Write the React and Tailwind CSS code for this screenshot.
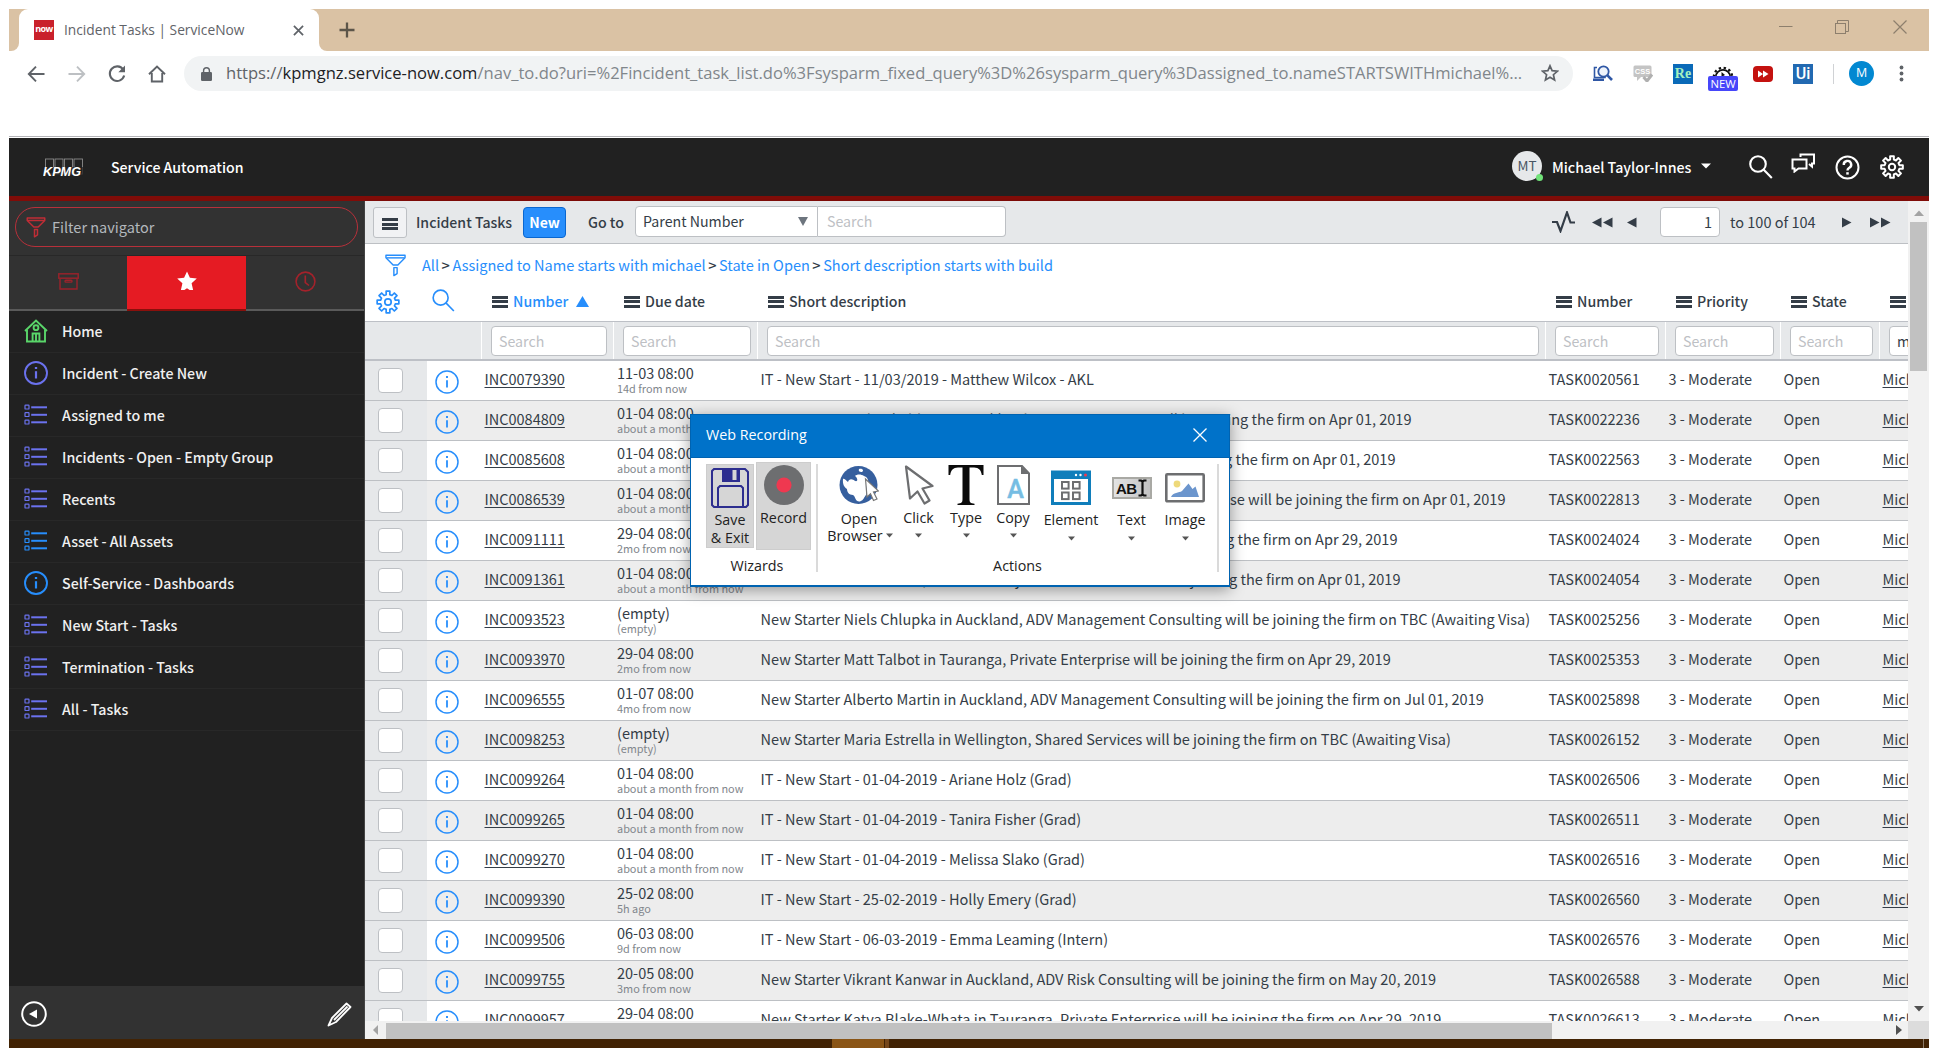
import React from "react";

const UI = "font-['Noto_Sans_CJK_SC',sans-serif]";
const SEGOE = "font-['Open_Sans',sans-serif]";

/* ---------- icons ---------- */

function Gear({ size, color, sw = 2 }) {
  const pts = [];
  const n = 8;
  for (let i = 0; i < n; i++) {
    const a = (i / n) * Math.PI * 2 - Math.PI / 2;
    const p = (r, d) => `${(12 + r * Math.cos(a + d)).toFixed(2)},${(12 + r * Math.sin(a + d)).toFixed(2)}`;
    pts.push(p(7.6, -0.24), p(11, -0.17), p(11, 0.17), p(7.6, 0.24));
  }
  return (
    <svg width={size} height={size} viewBox="0 0 24 24" fill="none" stroke={color} strokeWidth={sw} strokeLinejoin="round">
      <polygon points={pts.join(" ")} />
      <circle cx="12" cy="12" r="3.2" />
    </svg>
  );
}

function Magnifier({ size, color, sw = 2 }) {
  return (
    <svg width={size} height={size} viewBox="0 0 24 24" fill="none" stroke={color} strokeWidth={sw}>
      <circle cx="9" cy="9" r="7.8" />
      <path d="M14.5 14.5L22.8 23" />
    </svg>
  );
}

function Funnel({ w, h, color, sw = 1.5 }) {
  return (
    <svg width={w} height={h} viewBox="0 0 22 24" fill="none" stroke={color} strokeWidth={sw} strokeLinejoin="round">
      <path d="M1 1.2H21V4L13.5 11.5H8.5L1 4Z" />
      <path d="M1.5 4H20.5" />
      <path d="M9.3 14.2H12.7V20.5L9.3 22.6Z" />
    </svg>
  );
}

function InfoCircle({ color, size = 24, sw = 1.6 }) {
  return (
    <svg width={size} height={size} viewBox="0 0 24 24" fill="none" stroke={color} strokeWidth={sw}>
      <circle cx="12" cy="12" r="11" />
      <path d="M12 10.2V17.5" strokeWidth={sw + 0.3} />
      <path d="M12 6V8" strokeWidth={sw + 0.4} />
    </svg>
  );
}

function ListGlyph({ color }) {
  return (
    <svg width="24" height="22" viewBox="0 0 24 22" fill="none" stroke={color}>
      {[3, 10.5, 18].map((y) => (
        <g key={y}>
          <rect x="1" y={y - 1.8} width="4" height="3.8" rx="0.6" strokeWidth="1.2" />
          <path d={`M7.2 ${y + 0.3}H23`} strokeWidth="2" />
        </g>
      ))}
    </svg>
  );
}

function HomeGlyph() {
  return (
    <svg width="24" height="24" viewBox="0 0 24 24" fill="none" stroke="#5ad66a" strokeWidth="1.9">
      <path d="M1 12L12 1.5L23 12" />
      <path d="M3 10.5V22.5H21V10.5" />
      <circle cx="12" cy="8.7" r="2.4" />
      <path d="M8.6 22.5V14.5H15.4V22.5M12 14.5V22.5" />
    </svg>
  );
}

function Burger() {
  return (
    <span className="flex w-4 flex-col gap-[1.5px]">
      <span className="h-[3px] bg-[#343d47]" />
      <span className="h-[3px] bg-[#343d47]" />
      <span className="h-[3px] bg-[#343d47]" />
    </span>
  );
}

function Arrows({ dir, count }) {
  return (
    <svg width={count * 11 - 1} height="11" viewBox={`0 0 ${count * 11 - 1} 11`} fill="#343d47">
      {Array.from({ length: count }, (_, i) => (
        <path key={i} d={dir === "left" ? `M${i * 11} 5.5L${i * 11 + 9.5} 0.5V10.5Z` : `M${i * 11 + 9.5} 5.5L${i * 11} 0.5V10.5Z`} />
      ))}
    </svg>
  );
}

/* ---------- browser chrome ---------- */

function TabStrip() {
  return (
    <div className={`flex h-[42px] shrink-0 items-stretch bg-[#dac2a4] ${SEGOE}`}>
      <div className="w-[10px] bg-white">
        <div className="h-full rounded-br-[8px] bg-[#dac2a4]" />
      </div>
      <div className="flex w-[300px] items-center rounded-t-[9px] bg-white pl-[15px]">
        <div className="flex h-5 w-5 items-center justify-center bg-[#c9202b] pb-[2px] text-[9px] font-bold tracking-[-0.6px] text-white">now</div>
        <div className="ml-[10px] w-[229px] whitespace-nowrap text-[13.75px] text-[#5f6368]">Incident Tasks | ServiceNow</div>
        <svg width="11" height="11" viewBox="0 0 12 12" stroke="#5f6368" strokeWidth="1.9">
          <path d="M1 1L11 11M11 1L1 11" />
        </svg>
      </div>
      <div className="flex flex-1 items-center bg-white">
        <div className="flex h-full flex-1 items-center rounded-bl-[8px] bg-[#dac2a4] pl-5">
          <svg width="16" height="16" viewBox="0 0 16 16" stroke="#5c5549" strokeWidth="2.3">
            <path d="M8 0.5V15.5M0.5 8H15.5" />
          </svg>
          <div className="mb-[6px] ml-auto flex items-center pr-[22px]">
            <svg width="14" height="14" viewBox="0 0 14 14" stroke="#8d7f6d" fill="none"><path d="M0 6.5H13.5" /></svg>
            <svg className="ml-[42px]" width="14" height="14" viewBox="0 0 14 14" stroke="#8d7f6d" fill="none">
              <rect x="0.5" y="3.5" width="10" height="10" /><path d="M2.5 3V0.5H13.5V11.5H11" />
            </svg>
            <svg className="ml-[44px]" width="14" height="14" viewBox="0 0 14 14" stroke="#8d7f6d" strokeWidth="1.2"><path d="M0.5 0.5L13.5 13.5M13.5 0.5L0.5 13.5" /></svg>
          </div>
        </div>
      </div>
    </div>
  );
}

function AddressBar() {
  return (
    <div className={`flex h-[45px] shrink-0 items-center bg-white pl-[18px] ${SEGOE}`}>
      <svg width="18" height="18" viewBox="0 0 18 18" fill="none" stroke="#5f6368" strokeWidth="1.9"><path d="M17.5 9H2M9 1.7L1.8 9L9 16.3" /></svg>
      <svg className="ml-[23px]" width="18" height="18" viewBox="0 0 18 18" fill="none" stroke="#bdc0c3" strokeWidth="1.9"><path d="M0.5 9H16M9 1.7L16.2 9L9 16.3" /></svg>
      <svg className="ml-[22px]" width="18" height="18" viewBox="0 0 18 18" fill="none" stroke="#5f6368" strokeWidth="2.1">
        <path d="M15.2 4.6A7.3 7.3 0 1 0 16.2 10.6" /><path d="M17 0.5V7.2H10.3Z" fill="#5f6368" stroke="none" />
      </svg>
      <svg className="ml-[22px]" width="18" height="18" viewBox="0 0 18 18" fill="none" stroke="#5f6368" strokeWidth="1.9">
        <path d="M1 9.2L9 1.5L17 9.2M3.8 8V16.5H14.2V8" />
      </svg>
      <div className="ml-[18px] flex h-[35px] w-[1389px] items-center rounded-full bg-[#f1f3f4] pl-[17px]">
        <svg width="11" height="14" viewBox="0 0 11 14" fill="#5f6368">
          <rect x="0" y="5" width="11" height="9" rx="1.2" /><path d="M2.6 6V3.6a2.9 2.9 0 0 1 5.8 0V6" fill="none" stroke="#5f6368" strokeWidth="1.4" />
        </svg>
        <div className="ml-[14px] w-[1315px] whitespace-nowrap text-[16.57px] text-[#80868b]">
          <span className="text-[#5f6368]">https://</span><span className="text-[#202124]">kpmgnz.service-now.com</span>/nav_to.do?uri=%2Fincident_task_list.do%3Fsysparm_fixed_query%3D%26sysparm_query%3Dassigned_to.nameSTARTSWITHmichael%...
        </div>
        <svg className="-mt-[2px] shrink-0" width="18" height="18" viewBox="0 0 18 18" fill="none" stroke="#5f6368" strokeWidth="1.7">
          <path d="M9 1.8L11.1 6.7L16.5 7.2L12.4 10.7L13.6 16L9 13.2L4.4 16L5.6 10.7L1.5 7.2L6.9 6.7Z" />
        </svg>
      </div>
      <svg className="ml-[19px]" width="21" height="17" viewBox="0 0 21 17" fill="none">
        <path d="M5 2.5H2.5V12.5H13V11" stroke="#2f57a5" strokeWidth="1.6" /><path d="M1 13.5H12V16H1Z" fill="#2f57a5" />
        <circle cx="11.5" cy="6.5" r="5.2" stroke="#2f57a5" strokeWidth="1.8" fill="#eef3fb" /><path d="M15.2 10.2L20 15" stroke="#2f57a5" strokeWidth="2.6" />
      </svg>
      <svg className="ml-5" width="20" height="17" viewBox="0 0 20 17">
        <rect x="0.5" y="0.5" width="18" height="11.5" rx="1.5" fill="#c4c4c4" /><path d="M4 12V16L8 12Z" fill="#c4c4c4" />
        <text x="9.5" y="9" fontSize="7.5" fontWeight="700" fill="#fff" textAnchor="middle" fontFamily="Liberation Sans">CSS</text>
        <path d="M10.5 12L14 16L19 9.5" stroke="#b0b0b0" strokeWidth="3" fill="none" />
      </svg>
      <div className="ml-5 flex h-5 w-5 items-center justify-center bg-[#0a6ab8] font-['Liberation_Serif',serif] text-[14px] font-bold text-[#a5f0c0]">Re</div>
      <div className="ml-[15px] flex w-[30px] flex-col items-center self-start pt-[13px]">
        <svg width="22" height="13" viewBox="0 0 22 13" fill="none" stroke="#111">
          <path d="M3.8 13A7.2 7.2 0 0 1 18.2 13" strokeWidth="1.8" /><path d="M1.8 13A9.2 9.2 0 0 1 20.2 13" strokeWidth="2.2" strokeDasharray="2.4 2.6" />
          <path d="M9.5 8L13 11L9.5 13Z" fill="#111" stroke="none" />
        </svg>
        <div className="-mt-px flex h-[15px] w-[30px] items-center justify-center rounded-[2px] bg-[#4646fa] text-[11.3px] leading-none text-white">NEW</div>
      </div>
      <svg className="ml-[15px]" width="20" height="16" viewBox="0 0 20 16">
        <rect width="20" height="16" rx="4" fill="#c4120f" /><path d="M5 4.5L10 8L5 11.5ZM10 4.5L15.5 8L10 11.5Z" fill="#fff" />
      </svg>
      <div className="ml-5 flex h-5 w-5 items-center justify-center bg-[#2269b1] font-['Roboto',sans-serif] text-[16px] font-medium leading-none text-white">Ui</div>
      <div className="ml-5 h-5 w-px bg-[#d0d2d5]" />
      <div className="ml-[15px] flex h-[25px] w-[25px] items-center justify-center rounded-full bg-[#0288d1] text-[12.5px] text-white">M</div>
      <svg className="ml-[25px]" width="5" height="17" viewBox="0 0 5 17" fill="#5f6368"><circle cx="2.5" cy="2.5" r="1.9" /><circle cx="2.5" cy="8.5" r="1.9" /><circle cx="2.5" cy="14.5" r="1.9" /></svg>
    </div>
  );
}

/* ---------- application ---------- */

function Banner() {
  return (
    <div className="flex h-[63px] shrink-0 items-center border-b-[5px] border-[#800c08] bg-[#212121] pl-[34px] pt-[2px] text-white">
      <svg width="42" height="20" viewBox="0 0 42 20">
        <g fill="none" stroke="#8b8b8b" strokeWidth="0.9">
          <rect x="2.5" y="1" width="8" height="15" /><rect x="12" y="1" width="8" height="15" /><rect x="21.5" y="1" width="8" height="15" /><rect x="31" y="1" width="8.5" height="15" />
        </g>
        <path d="M0 9H42V20H0Z" fill="#212121" opacity="0.75" />
        <text x="0" y="17.5" fontSize="12.5" fontStyle="italic" fontWeight="700" fill="#fff" textLength="38" lengthAdjust="spacingAndGlyphs" fontFamily="Liberation Sans">KPMG</text>
      </svg>
      <div className="ml-[26px] whitespace-nowrap text-[14.15px] font-medium">Service Automation</div>
      <div className="relative -mt-[5px] ml-auto flex h-[30px] w-[30px] items-center justify-center rounded-full bg-[#e6e8ea] text-[13.5px] text-[#485563]">
        MT
        <span className="absolute -right-px bottom-0 h-[7px] w-[7px] rounded-full bg-[#71e279]" />
      </div>
      <div className="ml-[10px] w-[149px] whitespace-nowrap text-[14.2px] font-medium">Michael Taylor-Innes</div>
      <svg className="-mt-[5px]" width="10" height="6" viewBox="0 0 10 6" fill="#fff"><path d="M0 0.5H10L5 5.5Z" /></svg>
      <span className="-mt-[2px] ml-[38px]"><Magnifier size={24} color="#fff" sw={2.1} /></span>
      <svg className="-mt-[10px] ml-[18px]" width="25" height="20" viewBox="0 0 25 20" fill="none" stroke="#fff" strokeWidth="2">
        <path d="M1.5 6.5H15.5V15.5H7.5L3.5 18.5V15.5H1.5Z" /><path d="M9.5 4V1.5H23V10.5H21V13.5L18 11" />
      </svg>
      <svg className="-mt-[2px] ml-[19px]" width="25" height="25" viewBox="0 0 25 25" fill="none" stroke="#fff" strokeWidth="2">
        <circle cx="12.5" cy="12.5" r="11" /><path d="M8.8 10A3.7 3.7 0 1 1 14 13C12.8 13.8 12.5 14.2 12.5 15.6" strokeWidth="2.4" /><path d="M12.5 17.2V19.6" strokeWidth="2.5" />
      </svg>
      <span className="-mt-[2px] ml-[20px] mr-[25px]"><Gear size={24} color="#fff" sw={2} /></span>
    </div>
  );
}

const NAV = [
  ["home", "", "Home"],
  ["info", "#6b72ee", "Incident - Create New"],
  ["list", "#6b72ee", "Assigned to me"],
  ["list", "#6b72ee", "Incidents - Open - Empty Group"],
  ["list", "#6b72ee", "Recents"],
  ["list", "#278efc", "Asset - All Assets"],
  ["info", "#278efc", "Self-Service - Dashboards"],
  ["list", "#6b72ee", "New Start - Tasks"],
  ["list", "#6b72ee", "Termination - Tasks"],
  ["list", "#6b72ee", "All - Tasks"],
];

function Sidebar() {
  return (
    <div className="flex w-[356px] shrink-0 flex-col border-r border-[#444] bg-[#212121]">
      <div className="flex h-[55px] shrink-0 items-start border-b border-[#282828] bg-[#323232] pl-[6px] pt-[6px]">
        <div className="flex h-10 w-[343px] items-center rounded-full border border-[#b8303a] pl-[10px]">
          <Funnel w={20} h={21} color="#c02d36" sw={1.7} />
          <span className="ml-[6px] text-[14.5px] text-[#b3b8bd]">Filter navigator</span>
        </div>
      </div>
      <div className="flex h-[55px] shrink-0 bg-[#323232]">
        <div className="flex w-[118px] items-center justify-center border-b-2 border-[#5a5a5a]">
          <svg className="mb-[3px] ml-px" width="21" height="17" viewBox="0 0 21 17" fill="none" stroke="#9c222b" strokeWidth="1.4">
            <rect x="0.8" y="0.8" width="19.4" height="4.4" /><path d="M2 5.2V16H19V5.2" /><rect x="7" y="7.3" width="7" height="1.8" rx="0.9" />
          </svg>
        </div>
        <div className="flex w-[119px] items-center justify-center border-b-2 border-[#8a100c] bg-[#e51b23]">
          <svg className="mb-[3px]" width="20" height="20" viewBox="0 0 20 20" fill="#fff"><path d="M10 0.5L12.9 6.8L19.8 7.5L14.6 12.2L16.1 19H3.9L5.4 12.2L0.2 7.5L7.1 6.8Z" /><path d="M7 19.2L10 17.2L13 19.2Z" fill="#e51b23" /></svg>
        </div>
        <div className="flex flex-1 items-center justify-center border-b-2 border-[#5a5a5a]">
          <svg className="mb-[3px]" width="21" height="21" viewBox="0 0 21 21" fill="none" stroke="#a3222b" strokeWidth="1.6"><circle cx="10.5" cy="10.5" r="9.4" /><path d="M10.3 4.5V11.5L14 14.5" /></svg>
        </div>
      </div>
      <div className="flex-1">
        {NAV.map(([kind, color, label]) => (
          <div key={label} className="flex h-[42px] items-center border-b border-[#282828] pl-[15px]">
            <span className="mb-[2px] flex w-[38px]">
              {kind === "home" ? <HomeGlyph /> : kind === "info" ? <InfoCircle color={color} sw={1.9} /> : <ListGlyph color={color} />}
            </span>
            <span className="whitespace-nowrap text-[14.2px] font-medium text-[#f0f0f0]">{label}</span>
          </div>
        ))}
      </div>
      <div className="flex h-[53px] shrink-0 items-center justify-between bg-[#323232] pl-3 pr-[12px] pt-[3px]">
        <svg width="26" height="26" viewBox="0 0 26 26" fill="none" stroke="#fff" strokeWidth="2"><circle cx="13" cy="13" r="11.8" /><path d="M8 13L16 8.5V17.5Z" fill="#fff" stroke="none" /></svg>
        <svg width="25" height="25" viewBox="0 0 25 25" fill="none" stroke="#fff" strokeWidth="1.8" strokeLinejoin="round"><path d="M1.5 23.5L5 16L19.5 1.5L23.5 5L9 20Z" /><path d="M7 18L20.5 4.5" /></svg>
      </div>
    </div>
  );
}

function ListToolbar() {
  return (
    <div className="flex h-[43px] shrink-0 items-center border-b border-[#bdc0c4] bg-[#e6e8ea] pl-2 text-[#343d47] shadow-[0_1px_3px_rgba(0,0,0,0.12)]">
      <div className="mt-px flex h-[31px] w-[34px] items-center justify-center rounded-[3px] border border-[#bdc0c4] bg-[#f1f2f4] pt-[3px]"><Burger /></div>
      <div className="ml-[9px] mt-[2px] w-[107px] whitespace-nowrap text-[14.1px] font-medium">Incident Tasks</div>
      <div className="mt-px flex h-[31px] w-[43px] items-center justify-center rounded-[4px] border border-[#0a67d0] bg-[#278efc] text-[14px] font-bold text-white">New</div>
      <div className="ml-[22px] mt-[2px] w-[47px] whitespace-nowrap text-[14.2px] font-medium">Go to</div>
      <div className="mb-[2px] flex h-[31px] w-[183px] items-center justify-between rounded-l-[4px] border border-[#bdc0c4] bg-white pl-[7px] pr-[9px] text-[14.2px]">
        <span className="pt-px">Parent Number</span>
        <svg width="10" height="9" viewBox="0 0 10 9" fill="#6d757e"><path d="M0 0H10L5 9Z" /></svg>
      </div>
      <div className="mb-[2px] flex h-[31px] w-[188px] items-center rounded-r-[4px] border border-l-0 border-[#bdc0c4] bg-white pl-[9px] pt-px text-[14.2px] text-[#bdc0c4]">Search</div>
      <svg className="ml-auto" width="24" height="22" viewBox="0 0 24 22" fill="none" stroke="#343d47" strokeWidth="2.2"><path d="M0 11H5L8.5 20L15 1.5L18.5 11.5H23" /></svg>
      <span className="ml-[16px]"><Arrows dir="left" count={2} /></span>
      <span className="ml-[14px]"><Arrows dir="left" count={1} /></span>
      <div className="ml-[23px] flex h-[30px] w-[60px] items-center justify-end rounded-[4px] border border-[#bdc0c4] bg-white pr-[7px] text-[14.5px]">1</div>
      <div className="ml-[10px] w-[112px] whitespace-nowrap text-[14.5px]">to 100 of 104</div>
      <Arrows dir="right" count={1} />
      <span className="ml-[18px] mr-[17px]"><Arrows dir="right" count={2} /></span>
    </div>
  );
}

const GRID = "grid grid-cols-[62px_55px_132px_144px_788px_120px_115px_99px_28px]";

const HEADS = ["Number", "Due date", "Short description", "Number", "Priority", "State", ""];

const JOIN = "joining the firm on ";
const M = "about a month from now";
const ROWS = [
  ["INC0079390", "11-03 08:00", "14d from now", "IT - New Start - 11/03/2019 - Matthew Wilcox - AKL", "TASK0020561"],
  ["INC0084809", "01-04 08:00", M, ["New Starter Michael Abbott in Auckland, Tax", "will be " + JOIN + "Apr 01, 2019", "w-[651px]"], "TASK0022236"],
  ["INC0085608", "01-04 08:00", M, ["New Starter in Auckland, Audit", "will be " + JOIN + "Apr 01, 2019", "w-[635px]"], "TASK0022563"],
  ["INC0086539", "01-04 08:00", M, ["New Starter in Auckland,", "Private Enterprise will be " + JOIN + "Apr 01, 2019", "w-[745px]"], "TASK0022813"],
  ["INC0091111", "29-04 08:00", "2mo from now", ["New Starter in Wellington,", "will be " + JOIN + "Apr 29, 2019", "w-[637px]"], "TASK0024024"],
  ["INC0091361", "01-04 08:00", M, ["New Starter in Auckland, Deal Advisory", "will be " + JOIN + "Apr 01, 2019", "w-[640px]"], "TASK0024054"],
  ["INC0093523", "(empty)", "(empty)", "New Starter Niels Chlupka in Auckland, ADV Management Consulting will be joining the firm on TBC (Awaiting Visa)", "TASK0025256"],
  ["INC0093970", "29-04 08:00", "2mo from now", "New Starter Matt Talbot in Tauranga, Private Enterprise will be joining the firm on Apr 29, 2019", "TASK0025353"],
  ["INC0096555", "01-07 08:00", "4mo from now", "New Starter Alberto Martin in Auckland, ADV Management Consulting will be joining the firm on Jul 01, 2019", "TASK0025898"],
  ["INC0098253", "(empty)", "(empty)", "New Starter Maria Estrella in Wellington, Shared Services will be joining the firm on TBC (Awaiting Visa)", "TASK0026152"],
  ["INC0099264", "01-04 08:00", M, "IT - New Start - 01-04-2019 - Ariane Holz (Grad)", "TASK0026506"],
  ["INC0099265", "01-04 08:00", M, "IT - New Start - 01-04-2019 - Tanira Fisher (Grad)", "TASK0026511"],
  ["INC0099270", "01-04 08:00", M, "IT - New Start - 01-04-2019 - Melissa Slako (Grad)", "TASK0026516"],
  ["INC0099390", "25-02 08:00", "5h ago", "IT - New Start - 25-02-2019 - Holly Emery (Grad)", "TASK0026560"],
  ["INC0099506", "06-03 08:00", "9d from now", "IT - New Start - 06-03-2019 - Emma Leaming (Intern)", "TASK0026576"],
  ["INC0099755", "20-05 08:00", "3mo from now", "New Starter Vikrant Kanwar in Auckland, ADV Risk Consulting will be joining the firm on May 20, 2019", "TASK0026588"],
  ["INC0099957", "29-04 08:00", "2mo from now", "New Starter Katya Blake-Whata in Tauranga, Private Enterprise will be joining the firm on Apr 29, 2019", "TASK0026613"],
];

function Table() {
  return (
    <div className="flex min-h-0 flex-1 flex-col overflow-hidden bg-white text-[#343d47]">
      <div className="flex h-[42px] shrink-0 items-center pl-5">
        <Funnel w={21} h={23} color="#278efc" />
        <div className="ml-[16px] flex gap-[2.5px] whitespace-nowrap text-[14.55px] text-[#278efc]">
          <span>All</span><b className="font-medium text-[#343d47]">&gt;</b>
          <span>Assigned to Name starts with michael</span><b className="font-medium text-[#343d47]">&gt;</b>
          <span>State in Open</span><b className="font-medium text-[#343d47]">&gt;</b>
          <span>Short description starts with build</span>
        </div>
      </div>
      <div className={`h-[35px] shrink-0 ${GRID}`}>
        <div className="pl-[11px] pt-[4px]"><Gear size={24} color="#278efc" sw={1.7} /></div>
        <div className="pl-[5px] pt-[3px]"><Magnifier size={23} color="#278efc" sw={1.7} /></div>
        {HEADS.map((h, i) => (
          <div key={i} className="flex h-[31px] items-center overflow-hidden whitespace-nowrap pl-[10px] text-[14.15px] font-medium">
            <span className="shrink-0"><Burger /></span>
            <span className={i === 0 ? "ml-[5px] text-[#278efc]" : "ml-[5px]"}>{h}</span>
            {i === 0 && <svg className="ml-2" width="13" height="11" viewBox="0 0 13 11" fill="#278efc"><path d="M6.5 0L13 11H0Z" /></svg>}
          </div>
        ))}
      </div>
      <div className={`h-[40px] shrink-0 border-b-2 border-t border-[#bdc0c6] bg-[#e6e8ea] ${GRID}`}>
        <div />
        <div className="border-r border-white" />
        {HEADS.map((h, i) => (
          <div key={i} className={`flex items-center overflow-hidden pl-[9px] pt-px ${i < 6 ? "border-r border-white pr-[6px]" : ""}`}>
            <div className={`flex h-[30px] items-center border border-[#bdc0c4] bg-white pl-[7px] pt-px text-[14.2px] ${i < 6 ? "w-full rounded-[4px] text-[#bdc0c4]" : "w-[80px] shrink-0 rounded-l-[4px]"}`}>{i < 6 ? "Search" : "michael"}</div>
          </div>
        ))}
      </div>
      {ROWS.map(([inc, due, rel, desc, task], i) => (
        <div key={inc} className={`h-10 shrink-0 overflow-hidden whitespace-nowrap border-b border-[#bdc0c4] text-[14.5px] ${i % 2 ? "bg-[#ededed]" : "bg-white"} ${GRID}`}>
          <div className="flex items-center bg-[#e6e8ea] pl-[13px]"><span className="h-[25px] w-[25px] rounded-[4px] border border-[#bdc0c4] bg-white" /></div>
          <div className="pl-[8px] pt-[9px]"><InfoCircle color="#278efc" sw={1.5} /></div>
          <div className="pl-[2.5px] leading-[36px]"><span className="underline decoration-1 underline-offset-[2px]">{inc}</span></div>
          <div className="pl-[3px] pt-[2px]">
            <div className="leading-5">{due}</div>
            <div className="-mt-px text-[10.9px] leading-3 text-[#81868c]">{rel}</div>
          </div>
          <div className="pl-[2.5px] text-[14.54px] leading-[36px]">
            {Array.isArray(desc) ? <div className={`flex justify-between ${desc[2]}`}><span>{desc[0]}</span><span>{desc[1]}</span></div> : desc}
          </div>
          <div className="pl-[2.5px] leading-[36px]">{task}</div>
          <div className="pl-[2.5px] leading-[36px]">3 - Moderate</div>
          <div className="pl-[2.5px] leading-[36px]">Open</div>
          <div className="overflow-hidden pl-[2.5px] leading-[36px]"><span className="underline decoration-1 underline-offset-[2px]">Michael</span></div>
        </div>
      ))}
    </div>
  );
}

function ListPane() {
  return (
    <div className="flex min-w-0 flex-1 flex-col">
      <div className="flex min-h-0 flex-1">
        <div className="flex w-[1543px] shrink-0 flex-col">
          <ListToolbar />
          <Table />
        </div>
        <div className="flex flex-1 flex-col items-center bg-[#f1f1f1] py-[9px]">
          <svg width="10" height="6" viewBox="0 0 10 6" fill="#a3a3a3"><path d="M0 6L5 0.5L10 6Z" /></svg>
          <div className="mt-[6px] h-[149px] w-[17px] bg-[#c1c1c1]" />
          <svg className="mt-auto" width="10" height="6" viewBox="0 0 10 6" fill="#505050"><path d="M0 0L5 5.5L10 0Z" /></svg>
        </div>
      </div>
      <div className="flex h-[18px] shrink-0">
        <div className="flex w-[1543px] items-center bg-[#f1f1f1] pl-[8px]">
          <svg width="5" height="10" viewBox="0 0 5 10" fill="#a3a3a3"><path d="M5 0V10L0 5Z" /></svg>
          <div className="ml-[8px] mt-[2px] h-4 w-[1166px] bg-[#c1c1c1]" />
          <svg className="ml-auto mr-[6px]" width="6" height="10" viewBox="0 0 6 10" fill="#505050"><path d="M0 0V10L6 5Z" /></svg>
        </div>
        <div className="flex-1 bg-[#dcdcdc]" />
      </div>
    </div>
  );
}

/* ---------- recording dialog ---------- */

function Caret() {
  return <svg width="7" height="5" viewBox="0 0 7 5" fill="#555"><path d="M0 0.5H7L3.5 4.5Z" /></svg>;
}

function Action({ width, icon, label, low }) {
  return (
    <div className={`flex shrink-0 flex-col items-center ${width}`}>
      <div className="flex h-[40px] items-center justify-center">{icon}</div>
      <div className={`leading-[18px] ${low ? "mt-[6px]" : "mt-[4px]"}`}>{label}</div>
      <div className={low ? "mt-[7px]" : "mt-[6px]"}><Caret /></div>
    </div>
  );
}

function Recorder() {
  return (
    <div className={`absolute left-[690px] top-[414px] flex h-[173px] w-[540px] flex-col border border-b-2 border-[#0063b1] bg-white text-[14.3px] text-[#222] shadow-[0_3px_14px_rgba(0,0,0,0.38)] ${SEGOE}`}>
      <div className="flex h-[42px] shrink-0 items-center justify-between bg-[#0072c9] pb-[2px] pl-[15px] pr-[22px] text-white">
        Web Recording
        <svg width="14" height="14" viewBox="0 0 14 14" stroke="#fff" strokeWidth="1.3"><path d="M0.5 0.5L13.5 13.5M13.5 0.5L0.5 13.5" /></svg>
      </div>
      <div className="flex flex-1 border-t border-[#0063b1]">
        <div className="w-[125px] shrink-0">
          <div className="flex h-[94px] gap-[2px] pl-[15px] pt-[4px]">
            <div className="mt-[2px] flex h-[84px] w-[48px] flex-col items-center border border-[#cdcdcd] bg-[#d6d6d6] pt-[3px]">
              <svg width="38" height="40" viewBox="0 0 38 40" fill="none" stroke="#2d2e8f" strokeWidth="2">
                <path d="M3 1H34L37 4V37L35 39H3L1 37V3Z" /><path d="M11 0H29V14H11Z" fill="#2d2e8f" stroke="none" /><rect x="21.5" y="2" width="4" height="10" fill="#d6d6d6" stroke="none" /><path d="M7 39V20L9 18H30L32 20V39" />
              </svg>
              <div className="mt-[3px] text-center leading-[18px]">Save<br />&amp; Exit</div>
            </div>
            <div className="flex h-[88px] w-[55px] flex-col items-center border border-[#cdcdcd] bg-[#d6d6d6] pt-[2px]">
              <svg width="40" height="40" viewBox="0 0 40 40"><circle cx="20" cy="20" r="20" fill="#6d6e70" /><circle cx="20" cy="20" r="7.6" fill="#ef3850" /></svg>
              <div className="mt-[4px] leading-[18px]">Record</div>
            </div>
          </div>
          <div className="mt-[5px] pl-[7px] text-center leading-[18px]">Wizards</div>
        </div>
        <div className="mt-[6px] h-[108px] w-[2px] bg-[#dadada]" />
        <div className="w-[399px] shrink-0">
          <div className="flex h-[94px] pl-[7px] pt-[7px]">
            <div className="flex w-[68px] shrink-0 flex-col items-center">
              <svg width="40" height="40" viewBox="0 0 40 40">
                <circle cx="19.5" cy="20" r="19" fill="#365f9e" />
                <path d="M4 14C6 13 7 16 9 17C10 13 14 14 16 16C20 17 18 12 16 11C18 9 22 9 25 11C28 12 30 15 29 18L27 19V30C25 32 25 35 21 36.5C16 37 17 32 14 30C10 30 8 27 8 24C5 22 3.5 19 4 14Z" fill="#fff" />
                <path d="M20 4C24 3 25 6 23 7C21 7.5 19 6 20 4Z" fill="#fff" />
                <path d="M26.5 14L39.5 26L34.5 27L38 34L34.5 35.5L31.5 28.8L28 32Z" fill="#fff" stroke="#777" strokeWidth="1.2" />
              </svg>
              <div className="mt-[5px] leading-[17px]">Open</div>
              <div className="flex items-center gap-[3px] whitespace-nowrap pl-[2px] leading-[17px]">Browser <Caret /></div>
            </div>
            <Action width="w-[51px]" label="Click" icon={
              <svg width="30" height="40" viewBox="0 0 30 40" fill="#fff" stroke="#6d6e70" strokeWidth="2.2" strokeLinejoin="round"><path d="M2 1.5L28.5 21L18.5 23.5L25.5 35.5L20.5 38.5L13.5 26.5L6 33.5Z" /></svg>} />
            <Action width="w-[44px]" label="Type" icon={
              <svg width="36" height="40" viewBox="0 0 36 40" fill="#0b0b0b"><path d="M0.5 0H35.5V10H33.8C33 5 31 2.8 26 2.5H21.5V34C21.5 37.5 22.5 38.5 26.5 38.7V40H9.5V38.7C13.5 38.5 14.5 37.5 14.5 34V2.5H10C5 2.8 3 5 2.2 10H0.5Z" /></svg>} />
            <Action width="w-[50px]" label="Copy" icon={
              <svg width="33" height="40" viewBox="0 0 33 40">
                <path d="M1 1H25L32 8.5V39H1Z" fill="#fff" stroke="#6d6e70" strokeWidth="2" /><path d="M24 1V9H32Z" fill="#6d6e70" />
                <text x="18.5" y="32.5" fontSize="25" fontWeight="500" fill="#76bde3" stroke="#76bde3" strokeWidth="0.5" textAnchor="middle" fontFamily="Roboto">A</text>
              </svg>} />
            <Action low width="w-[66px]" label="Element" icon={
              <svg width="40" height="40" viewBox="0 0 40 40" fill="none">
                <rect x="1.5" y="7" width="37" height="31.5" fill="#fff" stroke="#107ebb" strokeWidth="3" /><rect x="0" y="6" width="40" height="8" fill="#107ebb" />
                <circle cx="25" cy="10" r="1.2" fill="#fff" /><circle cx="29.5" cy="10" r="1.2" fill="#fff" /><circle cx="34.5" cy="10" r="1.5" fill="#ef3850" />
                <g stroke="#6d6e70" strokeWidth="2"><rect x="11" y="17" width="6.6" height="6.6" /><rect x="22" y="17" width="6.6" height="6.6" /><rect x="11" y="27.5" width="6.6" height="6.6" /><rect x="22" y="27.5" width="6.6" height="6.6" /></g>
              </svg>} />
            <Action low width="w-[55px]" label="Text" icon={
              <svg width="40" height="40" viewBox="0 0 40 40">
                <defs><linearGradient id="field" x1="0" x2="1"><stop offset="0" stopColor="#e4e4e4" /><stop offset="1" stopColor="#c2c2c2" /></linearGradient></defs>
                <rect x="1" y="13" width="38" height="20" fill="url(#field)" stroke="#a9a9a4" strokeWidth="2" />
                <text x="4" y="28.5" fontSize="15" fontWeight="700" fill="#111" textLength="21" fontFamily="Liberation Sans">AB</text>
                <path d="M26.5 15.5H29L30.5 16.5L32 15.5H34.5M30.5 16V30M26.5 30.5H29L30.5 29.5L32 30.5H34.5" stroke="#111" strokeWidth="2.2" fill="none" />
              </svg>} />
            <Action low width="w-[52px]" label="Image" icon={
              <svg width="40" height="40" viewBox="0 0 40 40">
                <rect x="1.3" y="9.3" width="37.4" height="27" fill="#fff" stroke="#6d6e70" strokeWidth="2.6" rx="1" />
                <circle cx="12" cy="19" r="3.4" fill="#eed97a" /><path d="M6 32C8 27 14 28 17 26L23.5 18.5L27.5 24L30.5 21.5L34 32Z" fill="#6b95cd" />
              </svg>} />
          </div>
          <div className="mt-[5px] text-center leading-[18px]">Actions</div>
        </div>
        <div className="mt-[6px] h-[108px] w-[2px] bg-[#dadada]" />
      </div>
    </div>
  );
}

export default function App() {
  return (
    <div className={`relative h-[1048px] w-[1938px] overflow-hidden bg-white px-[9px] pt-[9px] ${UI}`}>
      <div className="flex h-[1039px] flex-col">
        <TabStrip />
        <AddressBar />
        <div className="mb-px mt-[40px] h-px shrink-0 bg-[#b4b4b8]" />
        <Banner />
        <div className="flex h-[838px] shrink-0">
          <Sidebar />
          <ListPane />
        </div>
        <div className={`flex h-[9px] shrink-0 overflow-hidden bg-[#422304] ${SEGOE}`}>
          <div className="ml-[823px] h-full w-[52px] bg-[#8a5516]" />
          <div className="ml-px h-full w-[4px] bg-[#75471a]" />
          <div className="ml-auto mr-[76px] pt-[6px] text-[13.5px] leading-[14px] text-white">12:43 PM</div>
          <div className="mr-[5px] h-full w-px bg-[#8c7a66]" />
        </div>
      </div>
      <Recorder />
    </div>
  );
}
